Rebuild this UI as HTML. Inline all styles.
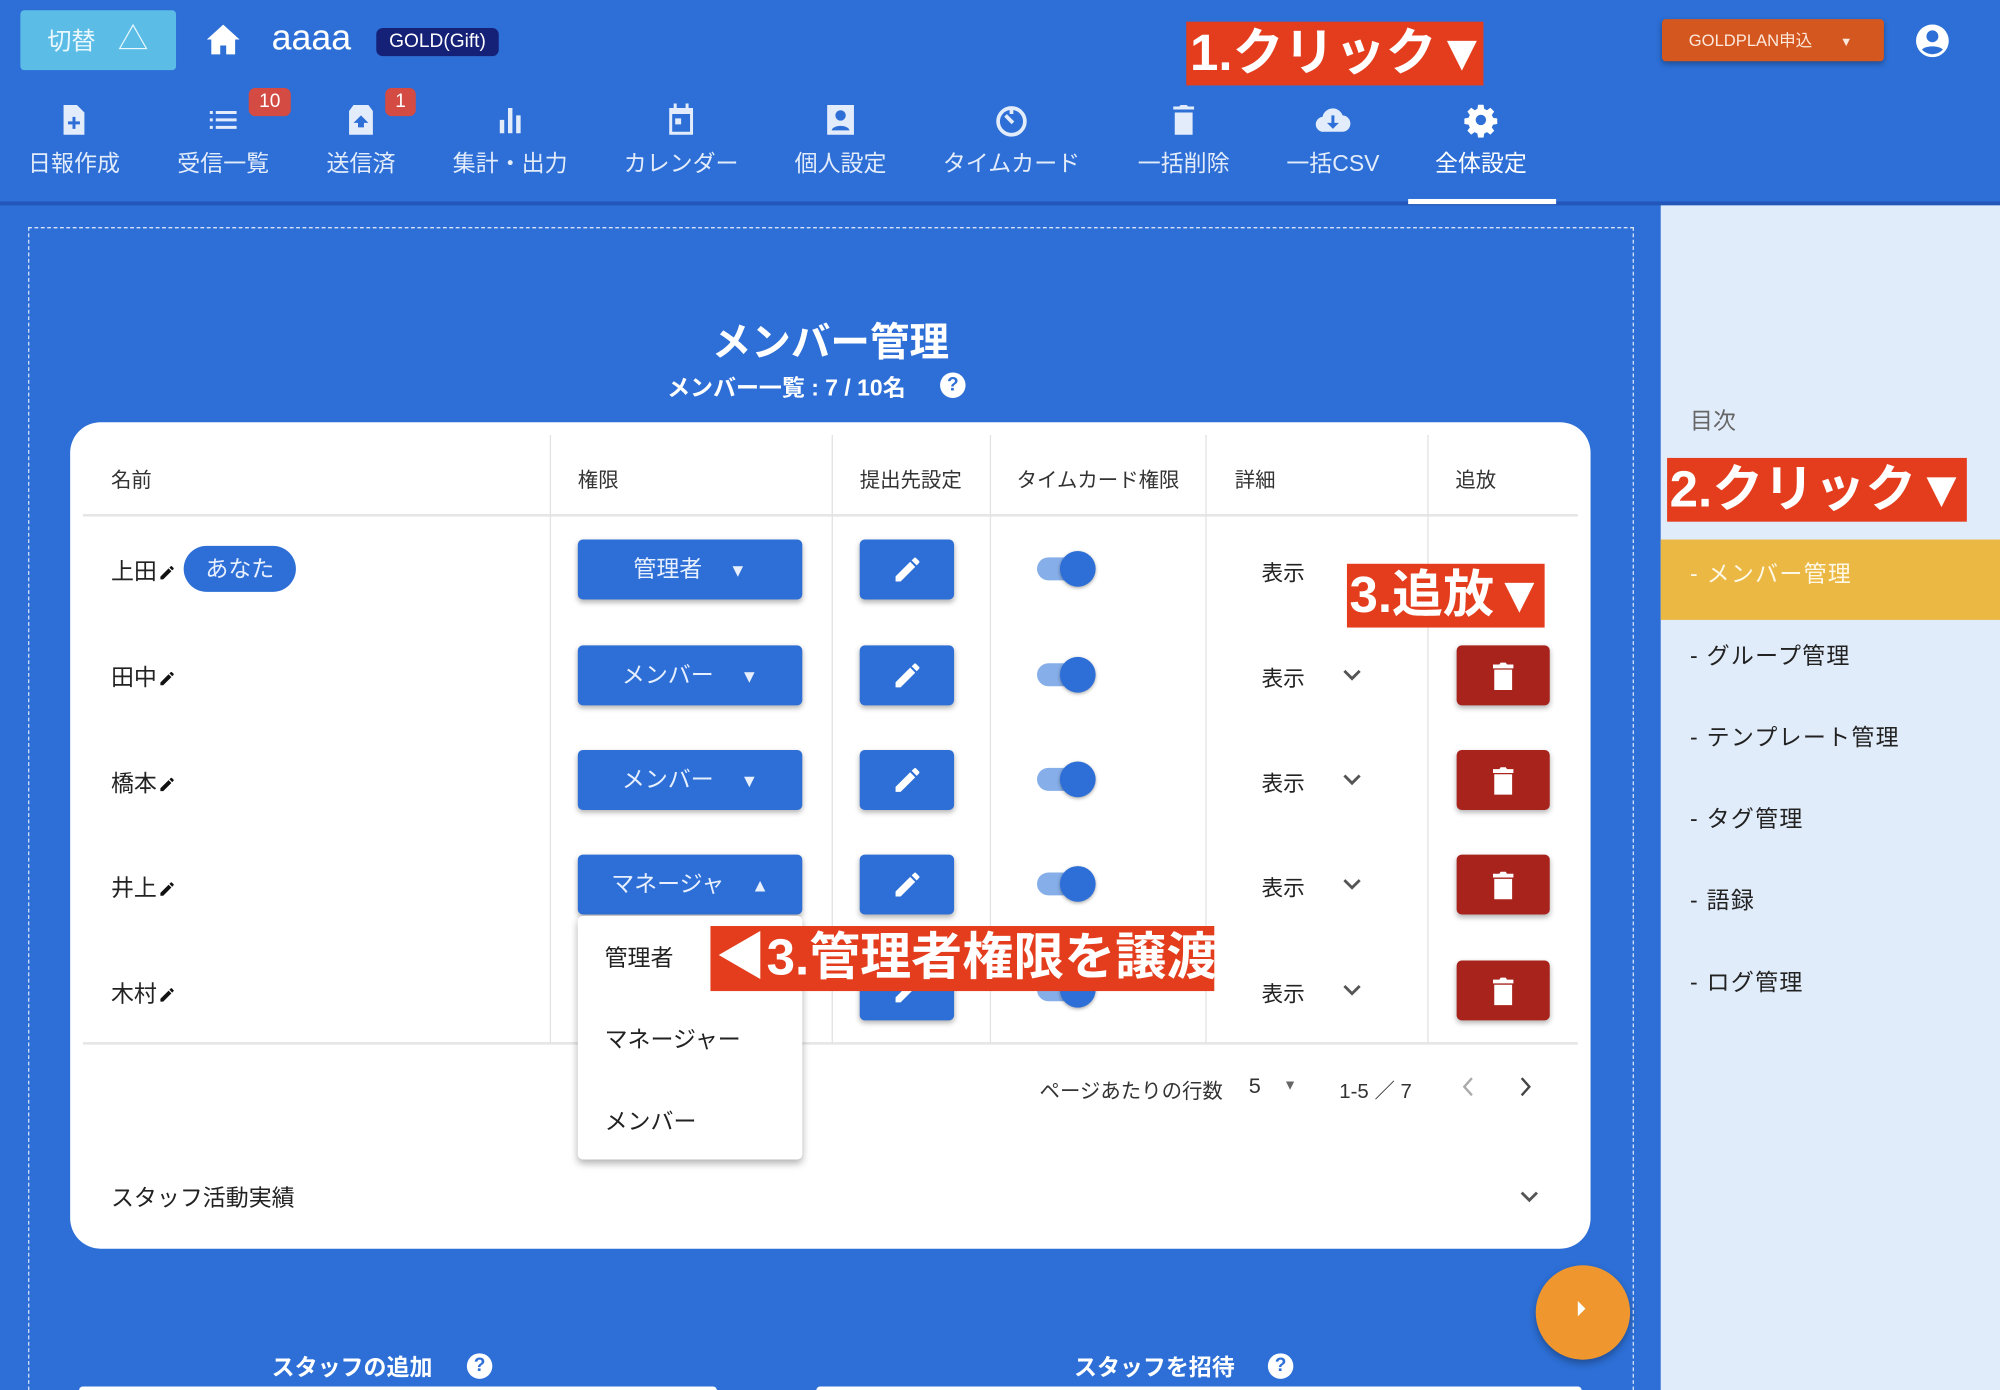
<!DOCTYPE html>
<html><head><meta charset="utf-8">
<style>
*{margin:0;padding:0;box-sizing:border-box}
html,body{width:2000px;height:1390px;overflow:hidden;background:#2d6fd6}
#w{position:absolute;left:0;top:0;width:1568px;height:1090px;transform:scale(1.27551);transform-origin:0 0;background:#2d6fd6;font-family:"Liberation Sans","Noto Sans CJK JP",sans-serif;overflow:hidden}
.a{position:absolute}
.nav{position:absolute;top:80px;width:120px;margin-left:-60px;text-align:center;color:#e3ecfb;font-size:18px}
.nav svg{display:block;margin:0 auto 6px;width:28px;height:28px}
.badge{position:absolute;background:#d34b42;color:#fff;font-size:15px;border-radius:5px;text-align:center;height:22px;line-height:22px}
.red{position:absolute;background:#e43d1d;color:#fff;font-weight:bold;white-space:nowrap;line-height:1}
.hd{position:absolute;top:363px;font-size:16px;color:#333}
.vl{position:absolute;top:341px;width:1px;height:477px;background:#e2e2e2}
.role{position:absolute;left:453px;width:176px;height:47px;background:#2d6fd6;border-radius:4px;box-shadow:0 2px 4px rgba(0,0,0,.3);color:#e8f0ff;font-size:18px;line-height:47px;text-align:center}
.role span{font-size:14px;margin-left:16px}
.edit{position:absolute;left:674px;width:74px;height:47px;background:#2d6fd6;border-radius:4px;box-shadow:0 2px 4px rgba(0,0,0,.3)}
.edit svg{position:absolute;left:25px;top:11px}
.tr{position:absolute;left:813px;width:40px;height:18px;background:#86aee9;border-radius:9px}
.kn{position:absolute;left:831px;width:28px;height:28px;border-radius:50%;background:#2d6fd6;box-shadow:0 1px 3px rgba(0,0,0,.35)}
.nm{position:absolute;left:87px;font-size:18px;color:#222}
.nm svg{display:inline-block;vertical-align:-3px;margin-left:1px}
.hy{position:absolute;left:989px;font-size:17px;color:#222}
.del{position:absolute;left:1142px;width:73px;height:47px;background:#a8231c;border-radius:4px;box-shadow:0 2px 4px rgba(0,0,0,.3)}
.del svg{position:absolute;left:26px;top:12px}
.side{position:absolute;left:1325px;font-size:18px;color:#222;letter-spacing:1px}
</style></head><body><div id="w">
<div class="a" style="left:0;top:158px;width:1568px;height:3px;background:#2256b8"></div>
<div class="a" style="left:16px;top:8px;width:122px;height:47px;background:#5bbde6;border-radius:3px;color:#eaf7ff;font-size:19px;line-height:47px;padding-left:21px">切替 <span style="font-size:24px;margin-left:12px">△</span></div>
<svg class="a" style="left:161px;top:18px" width="28" height="26" viewBox="0 0 24 22"><path d="M12 1L1 11h3v10h6v-6h4v6h6V11h3z" fill="#fff"/></svg>
<div class="a" style="left:213px;top:14px;color:#fff;font-size:28px">aaaa</div>
<div class="a" style="left:295px;top:22px;width:96px;height:22px;background:#142177;border-radius:5px;color:#fff;font-size:15px;line-height:22px;text-align:center">GOLD(Gift)</div>
<div class="red" style="left:930px;top:17px;width:233px;height:50px;font-size:40px;padding:5px 0 0 3px">1.クリック▼</div>
<div class="a" style="left:1303px;top:15px;width:174px;height:33px;background:#d3571e;border-radius:3px;box-shadow:0 2px 4px rgba(0,0,0,.3);color:#fde8dc;font-size:13px;line-height:33px;padding-left:21px">GOLDPLAN申込 <span style="margin-left:18px;font-size:10px">▼</span></div>
<svg class="a" style="left:1501px;top:18px" width="28" height="28" viewBox="0 0 24 24"><circle cx="12" cy="12" r="11" fill="#fff"/><circle cx="12" cy="9" r="4" fill="#2d6fd6"/><path d="M5 18c2-3 12-3 14 0c-2 2-5 3-7 3s-5-1-7-3z" fill="#2d6fd6"/></svg>
<div class="nav" style="left:58px"><svg viewBox="0 0 24 24"><path d="M5 2h9l5 5v15H5z" fill="#e3ecfb"/><path d="M11 10h2v3h3v2h-3v3h-2v-3H8v-2h3z" fill="#2d6fd6"/></svg>日報作成</div>
<div class="nav" style="left:175px"><svg viewBox="0 0 24 24"><path d="M3 6h2v2H3zM7 6h14v2H7zM3 11h2v2H3zM7 11h14v2H7zM3 16h2v2H3zM7 16h14v2H7z" fill="#e3ecfb"/></svg>受信一覧</div>
<div class="nav" style="left:283px"><svg viewBox="0 0 24 24"><path d="M4 6l3-4h10l3 4v16H4z" fill="#e3ecfb"/><path d="M12 9l-5 5h3v3h4v-3h3z" fill="#2d6fd6"/></svg>送信済</div>
<div class="nav" style="left:400px"><svg viewBox="0 0 24 24"><path d="M5 12h3v9H5zM10.5 4h3v17h-3zM16 9h3v12h-3z" fill="#e3ecfb"/></svg>集計・出力</div>
<div class="nav" style="left:534px"><svg viewBox="0 0 24 24"><path d="M4 4h3V1h2v3h6V1h2v3h3v18H4z" fill="#e3ecfb"/><path d="M6 8h12v12H6z" fill="#2d6fd6"/><path d="M8 11h4v4H8z" fill="#e3ecfb"/></svg>カレンダー</div>
<div class="nav" style="left:659px"><svg viewBox="0 0 24 24"><path d="M3 2h18v20H3z" fill="#e3ecfb"/><circle cx="12" cy="9" r="3.5" fill="#2d6fd6"/><path d="M6 19c1-4 11-4 12 0z" fill="#2d6fd6"/></svg>個人設定</div>
<div class="nav" style="left:793px"><svg viewBox="0 0 24 24"><circle cx="12" cy="13" r="9" fill="none" stroke="#e3ecfb" stroke-width="2.5"/><path d="M12 4v4M8 9l5 5" stroke="#e3ecfb" stroke-width="2.5"/></svg>タイムカード</div>
<div class="nav" style="left:928px"><svg viewBox="0 0 24 24"><path d="M5 3h4l1-1h4l1 1h4v2H5zM6 7h12v15H6z" fill="#e3ecfb"/></svg>一括削除</div>
<div class="nav" style="left:1045px"><svg viewBox="0 0 24 24"><path d="M6 20a5 5 0 0 1-1-10a7 7 0 0 1 13.5-1A5.5 5.5 0 0 1 18 20z" fill="#e3ecfb"/><path d="M11 9h2v5h3l-4 4l-4-4h3z" fill="#2d6fd6"/></svg>一括CSV</div>
<div class="nav" style="left:1161px;color:#fff"><svg viewBox="0 0 24 24"><path d="M10 1h4l.5 3 2 1 2.5-1.8 2.8 2.8L20 8.5l1 2 3 .5v4l-3 .5-1 2 1.8 2.5-2.8 2.8-2.5-1.8-2 1-.5 3h-4l-.5-3-2-1-2.5 1.8-2.8-2.8L4 17.5l-1-2-3-.5v-4l3-.5 1-2L2.2 6l2.8-2.8L7.5 5l2-1z" fill="#fff" transform="scale(.92) translate(1 1)"/><circle cx="12" cy="12" r="3.5" fill="#2d6fd6"/></svg>全体設定</div>
<div class="a" style="left:1104px;top:156px;width:116px;height:4px;background:#fff"></div>
<div class="badge" style="left:195px;top:69px;width:33px">10</div>
<div class="badge" style="left:302px;top:69px;width:24px">1</div>
<div class="a" style="left:1302px;top:161px;width:266px;height:929px;background:#e1ecfa"></div>
<div class="a" style="left:1325px;top:316px;font-size:18px;color:#666">目次</div>
<div class="red" style="left:1307px;top:359px;width:235px;height:50px;font-size:40px;padding:5px 0 0 2px">2.クリック▼</div>
<div class="a" style="left:1302px;top:423px;width:266px;height:63px;background:#eab843"></div>
<div class="side" style="top:436px;color:#fff8e6">- メンバー管理</div>
<div class="side" style="top:500px">- グループ管理</div>
<div class="side" style="top:564px">- テンプレート管理</div>
<div class="side" style="top:628px">- タグ管理</div>
<div class="side" style="top:692px">- 語録</div>
<div class="side" style="top:756px">- ログ管理</div>
<div class="a" style="left:22px;top:178px;width:1259px;height:912px;border:1px dashed #d8e4f8;border-bottom:none"></div>
<div class="a" style="left:451px;top:243px;width:400px;text-align:center;color:#fff;font-size:31px;font-weight:bold">メンバー管理</div>
<div class="a" style="left:523px;top:290px;color:#fff;font-size:18px;font-weight:bold">メンバー一覧 : 7 / 10名</div>
<div class="a" style="left:737px;top:292px;width:20px;height:20px;border-radius:50%;background:#fff;color:#2d6fd6;font-size:15px;font-weight:bold;text-align:center;line-height:20px">?</div>
<div class="a" style="left:55px;top:331px;width:1192px;height:648px;background:#fff;border-radius:24px"></div>
<div class="hd" style="left:87px">名前</div>
<div class="hd" style="left:453px">権限</div>
<div class="hd" style="left:674px">提出先設定</div>
<div class="hd" style="left:797px">タイムカード権限</div>
<div class="hd" style="left:968px">詳細</div>
<div class="hd" style="left:1141px">追放</div>
<div class="a" style="left:65px;top:403px;width:1172px;height:2px;background:#e6e6e6"></div>
<div class="a" style="left:65px;top:817px;width:1172px;height:2px;background:#e6e6e6"></div>
<div class="vl" style="left:431px"></div><div class="vl" style="left:652px"></div><div class="vl" style="left:776px"></div><div class="vl" style="left:945px"></div><div class="vl" style="left:1119px"></div>

<div class="nm" style="top:434px">上田<svg width="14" height="16" viewBox="0 0 24 24"><path d="M3 17.2V21h3.8L17.8 10 14 6.2zM20.7 7a1 1 0 0 0 0-1.4l-2.3-2.3a1 1 0 0 0-1.4 0L15.1 5.1l3.8 3.8z" fill="#111"/></svg></div>
<div class="a" style="left:144px;top:428px;width:88px;height:36px;background:#2d6fd6;border-radius:18px;color:#e8f0ff;font-size:18px;line-height:36px;text-align:center">あなた</div>
<div class="nm" style="top:517px">田中<svg width="14" height="16" viewBox="0 0 24 24"><path d="M3 17.2V21h3.8L17.8 10 14 6.2zM20.7 7a1 1 0 0 0 0-1.4l-2.3-2.3a1 1 0 0 0-1.4 0L15.1 5.1l3.8 3.8z" fill="#111"/></svg></div>
<div class="nm" style="top:600px">橋本<svg width="14" height="16" viewBox="0 0 24 24"><path d="M3 17.2V21h3.8L17.8 10 14 6.2zM20.7 7a1 1 0 0 0 0-1.4l-2.3-2.3a1 1 0 0 0-1.4 0L15.1 5.1l3.8 3.8z" fill="#111"/></svg></div>
<div class="nm" style="top:682px">井上<svg width="14" height="16" viewBox="0 0 24 24"><path d="M3 17.2V21h3.8L17.8 10 14 6.2zM20.7 7a1 1 0 0 0 0-1.4l-2.3-2.3a1 1 0 0 0-1.4 0L15.1 5.1l3.8 3.8z" fill="#111"/></svg></div>
<div class="nm" style="top:765px">木村<svg width="14" height="16" viewBox="0 0 24 24"><path d="M3 17.2V21h3.8L17.8 10 14 6.2zM20.7 7a1 1 0 0 0 0-1.4l-2.3-2.3a1 1 0 0 0-1.4 0L15.1 5.1l3.8 3.8z" fill="#111"/></svg></div>

<div class="role" style="top:423px">管理者 <span>▼</span></div>
<div class="role" style="top:506px">メンバー <span>▼</span></div>
<div class="role" style="top:588px">メンバー <span>▼</span></div>
<div class="role" style="top:670px">マネージャ <span>▲</span></div>

<div class="edit" style="top:423px"><svg width="25" height="25" viewBox="0 0 24 24"><path d="M3 17.2V21h3.8L17.8 10 14 6.2zM20.7 7a1 1 0 0 0 0-1.4l-2.3-2.3a1 1 0 0 0-1.4 0L15.1 5.1l3.8 3.8z" fill="#fff"/></svg></div>
<div class="edit" style="top:506px"><svg width="25" height="25" viewBox="0 0 24 24"><path d="M3 17.2V21h3.8L17.8 10 14 6.2zM20.7 7a1 1 0 0 0 0-1.4l-2.3-2.3a1 1 0 0 0-1.4 0L15.1 5.1l3.8 3.8z" fill="#fff"/></svg></div>
<div class="edit" style="top:588px"><svg width="25" height="25" viewBox="0 0 24 24"><path d="M3 17.2V21h3.8L17.8 10 14 6.2zM20.7 7a1 1 0 0 0 0-1.4l-2.3-2.3a1 1 0 0 0-1.4 0L15.1 5.1l3.8 3.8z" fill="#fff"/></svg></div>
<div class="edit" style="top:670px"><svg width="25" height="25" viewBox="0 0 24 24"><path d="M3 17.2V21h3.8L17.8 10 14 6.2zM20.7 7a1 1 0 0 0 0-1.4l-2.3-2.3a1 1 0 0 0-1.4 0L15.1 5.1l3.8 3.8z" fill="#fff"/></svg></div>
<div class="edit" style="top:753px"><svg width="25" height="25" viewBox="0 0 24 24"><path d="M3 17.2V21h3.8L17.8 10 14 6.2zM20.7 7a1 1 0 0 0 0-1.4l-2.3-2.3a1 1 0 0 0-1.4 0L15.1 5.1l3.8 3.8z" fill="#fff"/></svg></div>

<div class="tr" style="top:437px"></div><div class="kn" style="top:432px"></div>
<div class="tr" style="top:520px"></div><div class="kn" style="top:515px"></div>
<div class="tr" style="top:602px"></div><div class="kn" style="top:597px"></div>
<div class="tr" style="top:684px"></div><div class="kn" style="top:679px"></div>
<div class="tr" style="top:767px"></div><div class="kn" style="top:762px"></div>

<div class="hy" style="top:435px">表示</div>
<div class="hy" style="top:518px">表示</div>
<div class="hy" style="top:600px">表示</div>
<div class="hy" style="top:682px">表示</div>
<div class="hy" style="top:765px">表示</div>
<svg class="a" style="left:1051px;top:520px" width="18" height="18" viewBox="0 0 24 24"><path d="M4 8l8 8 8-8" fill="none" stroke="#555" stroke-width="3"/></svg>
<svg class="a" style="left:1051px;top:602px" width="18" height="18" viewBox="0 0 24 24"><path d="M4 8l8 8 8-8" fill="none" stroke="#555" stroke-width="3"/></svg>
<svg class="a" style="left:1051px;top:684px" width="18" height="18" viewBox="0 0 24 24"><path d="M4 8l8 8 8-8" fill="none" stroke="#555" stroke-width="3"/></svg>
<svg class="a" style="left:1051px;top:767px" width="18" height="18" viewBox="0 0 24 24"><path d="M4 8l8 8 8-8" fill="none" stroke="#555" stroke-width="3"/></svg>

<div class="del" style="top:506px"><svg width="21" height="24" viewBox="0 0 20 24"><path d="M2 3h5l1-1.5h4L13 3h5v3H2zM3 7h14v16H3z" fill="#fff"/></svg></div>
<div class="del" style="top:588px"><svg width="21" height="24" viewBox="0 0 20 24"><path d="M2 3h5l1-1.5h4L13 3h5v3H2zM3 7h14v16H3z" fill="#fff"/></svg></div>
<div class="del" style="top:670px"><svg width="21" height="24" viewBox="0 0 20 24"><path d="M2 3h5l1-1.5h4L13 3h5v3H2zM3 7h14v16H3z" fill="#fff"/></svg></div>
<div class="del" style="top:753px"><svg width="21" height="24" viewBox="0 0 20 24"><path d="M2 3h5l1-1.5h4L13 3h5v3H2zM3 7h14v16H3z" fill="#fff"/></svg></div>

<div class="red" style="left:1056px;top:442px;width:155px;height:50px;font-size:40px;padding:5px 0 0 2px">3.追放▼</div>

<div class="a" style="left:453px;top:718px;width:176px;height:191px;background:#fff;border-radius:4px;box-shadow:0 3px 6px rgba(0,0,0,.3)"></div>
<div class="a" style="left:474px;top:737px;font-size:18px;color:#222">管理者</div>
<div class="a" style="left:474px;top:801px;font-size:18px;color:#222">マネージャー</div>
<div class="a" style="left:474px;top:865px;font-size:18px;color:#222">メンバー</div>
<div class="red" style="left:557px;top:726px;width:395px;height:51px;font-size:40px;padding:5px 0 0 4px">◀3.管理者権限を譲渡</div>

<div class="a" style="left:815px;top:842px;font-size:16px;color:#333">ページあたりの行数</div>
<div class="a" style="left:979px;top:842px;font-size:17px;color:#333">5</div>
<div class="a" style="left:1006px;top:845px;font-size:11px;color:#666">▼</div>
<div class="a" style="left:1050px;top:842px;font-size:16px;color:#333">1-5 ／ 7</div>
<svg class="a" style="left:1142px;top:842px" width="18" height="20" viewBox="0 0 24 24"><path d="M16 3l-8 9 8 9" fill="none" stroke="#aaa" stroke-width="2.5"/></svg>
<svg class="a" style="left:1187px;top:842px" width="18" height="20" viewBox="0 0 24 24"><path d="M8 3l8 9-8 9" fill="none" stroke="#444" stroke-width="2.5"/></svg>
<div class="a" style="left:87px;top:925px;font-size:18px;color:#222">スタッフ活動実績</div>
<svg class="a" style="left:1190px;top:929px" width="18" height="18" viewBox="0 0 24 24"><path d="M4 8l8 8 8-8" fill="none" stroke="#555" stroke-width="3"/></svg>

<div class="a" style="left:1204px;top:992px;width:74px;height:74px;border-radius:50%;background:#ef972e;box-shadow:0 3px 6px rgba(0,0,0,.3)"></div>
<div class="a" style="left:1237px;top:1020px;width:0;height:0;border-left:6px solid #fff;border-top:6px solid transparent;border-bottom:6px solid transparent"></div>

<div class="a" style="left:213px;top:1058px;font-size:18px;font-weight:bold;color:#fff">スタッフの追加</div>
<div class="a" style="left:366px;top:1061px;width:20px;height:20px;border-radius:50%;background:#fff;color:#2d6fd6;font-size:15px;font-weight:bold;text-align:center;line-height:20px">?</div>
<div class="a" style="left:842px;top:1058px;font-size:18px;font-weight:bold;color:#fff">スタッフを招待</div>
<div class="a" style="left:994px;top:1061px;width:20px;height:20px;border-radius:50%;background:#fff;color:#2d6fd6;font-size:15px;font-weight:bold;text-align:center;line-height:20px">?</div>
<div class="a" style="left:62px;top:1087px;width:500px;height:3px;background:#fff;border-radius:16px 16px 0 0"></div>
<div class="a" style="left:640px;top:1087px;width:600px;height:3px;background:#fff;border-radius:16px 16px 0 0"></div>
</div></body></html>
